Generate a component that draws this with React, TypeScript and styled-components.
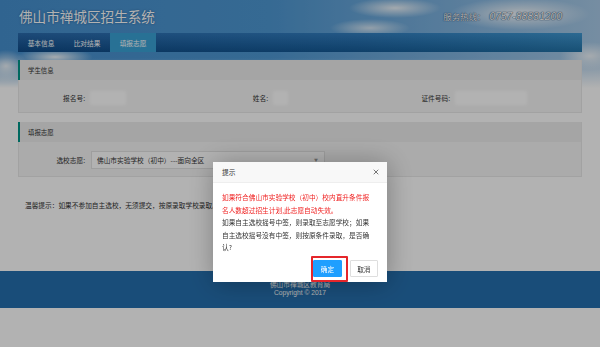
import styled, { createGlobalStyle } from "styled-components"
import { X } from "lucide-react"

const GlobalStyle = createGlobalStyle`
    * {
        box-sizing: border-box;
    }
    body {
        margin: 0;
        font-family: "Noto Sans CJK SC", "Liberation Sans", sans-serif;
        color: #333;
    }
`

type FieldType = {
    label: string
    labelWidth: number
    valueWidth: number
}

const studentFields: FieldType[] = [
    { label: "报名号:", labelWidth: 66, valueWidth: 34 },
    { label: "姓名:", labelWidth: 61, valueWidth: 13 },
    { label: "证件号码:", labelWidth: 55, valueWidth: 70 }
]

const tabs = ["基本信息", "比对结果", "填报志愿"]

export default function App() {
    return (
        <>
            <GlobalStyle />
            <Page>
                <Container>
                    <TitleRow>
                        <SiteTitle>佛山市禅城区招生系统</SiteTitle>
                        <Hotline>
                            服务热线：<em>0757-88881200</em>
                        </Hotline>
                    </TitleRow>
                    <NavBar>
                        {tabs.map((t, i) => (
                            <NavTab key={t} $active={i === 2}>
                                {t}
                            </NavTab>
                        ))}
                    </NavBar>
                </Container>

                <Main>
                    <Panel>
                        <PanelHead>学生信息</PanelHead>
                        <FieldGrid>
                            {studentFields.map((f) => (
                                <Field key={f.label}>
                                    <Label $w={f.labelWidth}>{f.label}</Label>
                                    <Blurred $w={f.valueWidth} />
                                </Field>
                            ))}
                        </FieldGrid>
                    </Panel>

                    <Panel>
                        <PanelHead>填报志愿</PanelHead>
                        <SelectRow>
                            <Label $w={66}>选校志愿:</Label>
                            <SelectBox>
                                <span>佛山市实验学校（初中）---面向全区</span>
                                <Caret>▼</Caret>
                            </SelectBox>
                        </SelectRow>
                    </Panel>

                    <Tip>温馨提示：如果不参加自主选校，无须提交，按原录取学校录取。</Tip>
                </Main>

                <Footer>
                    <p>佛山市禅城区教育局</p>
                    <p>Copyright © 2017</p>
                </Footer>
            </Page>

            <Shade />

            <Dialog>
                <DialogTitle>
                    提示
                    <CloseButton>
                        <X size={8} strokeWidth={2} />
                    </CloseButton>
                </DialogTitle>
                <DialogBody>
                    <Warn>
                        如果符合佛山市实验学校（初中）校内直升条件报
                        <br />
                        名人数超过招生计划,此志愿自动失效。
                    </Warn>
                    <p>
                        如果自主选校摇号中签，则录取至志愿学校；如果
                        <br />
                        自主选校摇号没有中签，则按原条件录取，是否确
                        <br />
                        认?
                    </p>
                </DialogBody>
                <DialogActions>
                    <DialogButton $primary>确定</DialogButton>
                    <DialogButton>取消</DialogButton>
                </DialogActions>
                <Highlight />
            </Dialog>
        </>
    )
}

const Page = styled.div`
    width: 600px;
    min-height: 347px;
    background-color: #fff;
    background-image:
        radial-gradient(ellipse 46px 10px at 395px 8px, rgba(255, 255, 255, 0.85), transparent),
        radial-gradient(ellipse 70px 16px at 520px 14px, rgba(255, 255, 255, 0.9), transparent),
        radial-gradient(ellipse 40px 9px at 370px 28px, rgba(255, 255, 255, 0.7), transparent),
        radial-gradient(ellipse 30px 14px at 590px 56px, rgba(255, 255, 255, 0.8), transparent),
        radial-gradient(ellipse 38px 9px at 55px 57px, rgba(255, 255, 255, 0.9), transparent),
        radial-gradient(ellipse 22px 16px at 6px 66px, rgba(255, 255, 255, 0.85), transparent),
        linear-gradient(to bottom, transparent 58px, #fff 88px),
        linear-gradient(to right, #4690cf 0%, #4e98d3 45%, #7fb3df 75%, #a9cbe8 100%);
    background-size: 600px 90px;
    background-repeat: no-repeat;
    display: flex;
    flex-direction: column;
`

const Container = styled.div`
    width: 564px;
    margin: 0 auto;
`

const TitleRow = styled.div`
    height: 33px;
    display: flex;
    align-items: center;
    justify-content: space-between;
    padding: 0 20px 1px 1px;
`

const SiteTitle = styled.h1`
    margin: 0;
    font-size: 13.6px;
    font-weight: 400;
    color: #fff;
    text-shadow: 0 0 2px rgba(0, 40, 90, 0.5);
`

const Hotline = styled.div`
    font-size: 8.4px;
    color: #fff;
    text-shadow: 0 0 1px #1c3f66, 0 0 1px #1c3f66;

    em {
        font-family: "Liberation Sans", sans-serif;
        font-size: 10.4px;
        margin-left: 4px;
    }
`

const NavBar = styled.nav`
    height: 19px;
    display: flex;
    background:
        linear-gradient(to bottom, rgba(255, 255, 255, 0.1), rgba(0, 0, 0, 0.18)),
        linear-gradient(to right, #125aa4, #1a6fb8 60%, #2a8ccc);
`

const NavTab = styled.div<{ $active?: boolean }>`
    width: 46px;
    display: flex;
    align-items: center;
    justify-content: center;
    font-size: 6.7px;
    color: #fff;
    background: ${({ $active }) => ($active ? "#3aa2d6" : "transparent")};
`

const Main = styled.main`
    width: 564px;
    height: 219px;
    margin: 0 auto;
    padding-top: 8px;
`

const Panel = styled.section`
    background: #f5f5f5;
    border: 1px solid #e8e8e8;

    & + & {
        margin-top: 9px;
    }
`

const PanelHead = styled.div`
    height: 20px;
    margin: -1px 0 0 -1px;
    display: flex;
    align-items: center;
    padding-left: 8px;
    background: #ececec;
    border-left: 2px solid #009688;
    font-size: 6.4px;
    color: #333;
`

const FieldGrid = styled.div`
    height: 32px;
    display: grid;
    grid-template-columns: 188px 188px 1fr;
    align-items: center;
    padding-top: 3px;
`

const Field = styled.div`
    display: flex;
    align-items: center;
`

const Label = styled.span<{ $w: number }>`
    width: ${({ $w }) => $w}px;
    text-align: right;
    font-size: 6.7px;
    color: #333;
    margin-right: 6px;
    flex-shrink: 0;
`

const Blurred = styled.span<{ $w: number }>`
    width: ${({ $w }) => $w}px;
    height: 12px;
    background: #fff;
    box-shadow: 0 0 2px 1px #fff;
    filter: blur(1px);
`

const SelectRow = styled.div`
    height: 34px;
    display: flex;
    align-items: center;
    padding-top: 1px;
`

const SelectBox = styled.div`
    width: 234px;
    height: 18px;
    display: flex;
    align-items: center;
    justify-content: space-between;
    padding: 0 6px 0 5px;
    background: #fff;
    border: 1px solid #e2e2e2;
    font-size: 6.7px;
    color: #333;
`

const Caret = styled.span`
    font-size: 4px;
    color: #999;
`

const Tip = styled.p`
    margin: 23px 0 0 7px;
    font-size: 6.7px;
    line-height: 10px;
    color: #333;
`

const Footer = styled.footer`
    height: 37px;
    background: #256fae;
    display: flex;
    flex-direction: column;
    align-items: center;
    justify-content: center;
    padding-bottom: 2px;

    p {
        margin: 0;
        font-size: 6.7px;
        line-height: 8.5px;
        color: #fff;
    }

    p:last-child {
        font-family: "Liberation Sans", sans-serif;
    }
`

const Shade = styled.div`
    position: fixed;
    inset: 0;
    background: rgba(0, 0, 0, 0.3);
`

const Dialog = styled.div`
    position: fixed;
    left: 213px;
    top: 162px;
    width: 174px;
    height: 120px;
    background: #fff;
    box-shadow: 1px 1px 25px rgba(0, 0, 0, 0.3);
    display: flex;
    flex-direction: column;
`

const DialogTitle = styled.div`
    position: relative;
    height: 21px;
    flex-shrink: 0;
    display: flex;
    align-items: center;
    padding-left: 9px;
    background: #f8f8f8;
    border-bottom: 1px solid #eee;
    font-size: 6.7px;
    color: #333;
`

const CloseButton = styled.span`
    position: absolute;
    right: 7px;
    top: 6px;
    display: flex;
    color: #333;
`

const DialogBody = styled.div`
    flex: 1;
    padding: 8px 9px 0;
    font-size: 6.7px;
    line-height: 12.6px;
    color: #333;
    white-space: nowrap;

    p {
        margin: 0;
    }
`

const Warn = styled.p`
    color: #f02222;
`

const DialogActions = styled.div`
    display: flex;
    justify-content: flex-end;
    gap: 8px;
    padding: 0 9px 5px;
`

const DialogButton = styled.button<{ $primary?: boolean }>`
    height: 17px;
    padding: 0 6.5px;
    font-family: inherit;
    font-size: 6.7px;
    border-radius: 1px;
    border: 1px solid ${({ $primary }) => ($primary ? "#1e9fff" : "#dedede")};
    background: ${({ $primary }) => ($primary ? "#1e9fff" : "#fff")};
    color: ${({ $primary }) => ($primary ? "#fff" : "#333")};
`

const Highlight = styled.div`
    position: absolute;
    left: 98px;
    top: 94px;
    width: 37px;
    height: 26px;
    border: 2px solid #e5262b;
    border-radius: 1px;
`
